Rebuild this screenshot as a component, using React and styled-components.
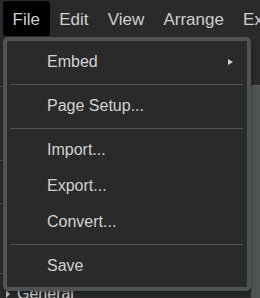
import React from "react";
import styled, { createGlobalStyle } from "styled-components";

const Global = createGlobalStyle`
  html, body { margin: 0; padding: 0; background: #2a2a2a; }
  body { font-family: "Liberation Sans", Arial, sans-serif; overflow: hidden; }
  * { box-sizing: border-box; }
`;

const Page = styled.div`
  position: relative;
  width: 260px;
  height: 298px;
  overflow: hidden;
  background: #2a2a2a;
  display: flex;
  flex-direction: column;
`;

const MenuBar = styled.div`
  display: flex;
  height: 37px;
  padding: 1px 0 1px 3px;
  background: #2a2a2a;
  white-space: nowrap;
`;

const BarItem = styled.div`
  height: 35px;
  padding: 2px 9.6px 0;
  line-height: 33px;
  font-size: 17px;
  color: #cfcfcf;
  border-radius: 3px;
  background: ${(p) => (p.$active ? "#000000" : "transparent")};
  flex-shrink: 0;
`;

const Body = styled.div`
  flex: 1;
  display: flex;
  min-height: 0;
`;

const Sidebar = styled.div`
  flex: 1;
  display: flex;
  flex-direction: column;
`;

const BgRow = styled.div`
  height: ${(p) => p.$h}px;
  border-bottom: 1px solid #4e5454;
  flex-shrink: 0;
`;

const GeneralRow = styled.div`
  display: flex;
  align-items: center;
  gap: 7px;
  padding: 11px 0 0 6px;
  font-size: 16px;
  color: #cfcfcf;
`;

const Caret = styled.span`
  width: 0;
  height: 0;
  border-top: 4px solid transparent;
  border-bottom: 4px solid transparent;
  border-left: 4px solid #bdbdbd;
`;

const Track = styled.div`
  width: 9px;
  display: flex;
  flex-direction: column;
  padding-top: 48px;
`;

const Thumb = styled.div`
  flex: 1;
  background: #4e5454;
  border-top: 1px solid #5a6060;
  border-top-left-radius: 3px;
`;

const Dropdown = styled.div`
  position: absolute;
  top: 37px;
  left: 3px;
  width: 248px;
  border: 4px solid #4e5454;
  border-radius: 5px;
  background: #2a2a2a;
  padding: 3px 0;
  box-shadow: 0 2px 4px rgba(0, 0, 0, 0.35);
  display: flex;
  flex-direction: column;
`;

const Item = styled.div`
  height: 36px;
  line-height: 36px;
  padding: 0 14px 0 40px;
  font-size: 16px;
  color: #d2d2d2;
  display: flex;
  justify-content: space-between;
  align-items: center;
  white-space: nowrap;
`;

const SubArrow = styled.span`
  width: 0;
  height: 0;
  border-top: 3.5px solid transparent;
  border-bottom: 3.5px solid transparent;
  border-left: 5px solid #cfcfcf;
`;

const Separator = styled.div`
  height: 1px;
  margin: 4px 4px 3px 3px;
  background: #4e5454;
`;

const menu = [
  { label: "Embed", sub: true },
  "sep",
  { label: "Page Setup..." },
  "sep",
  { label: "Import..." },
  { label: "Export..." },
  { label: "Convert..." },
  "sep",
  { label: "Save" },
];

export default function App() {
  return (
    <>
      <Global />
      <Page>
        <MenuBar>
          <BarItem $active>File</BarItem>
          <BarItem>Edit</BarItem>
          <BarItem>View</BarItem>
          <BarItem>Arrange</BarItem>
          <BarItem>Extras</BarItem>
        </MenuBar>
        <Body>
          <Sidebar>
            <BgRow $h={50} />
            <BgRow $h={74} />
            <BgRow $h={43} />
            <BgRow $h={70} />
            <GeneralRow>
              <Caret />
              <span>General</span>
            </GeneralRow>
          </Sidebar>
          <Track>
            <Thumb />
          </Track>
        </Body>
        <Dropdown>
          {menu.map((m, i) =>
            m === "sep" ? (
              <Separator key={i} />
            ) : (
              <Item key={i}>
                <span>{m.label}</span>
                {m.sub && <SubArrow />}
              </Item>
            )
          )}
        </Dropdown>
      </Page>
    </>
  );
}
